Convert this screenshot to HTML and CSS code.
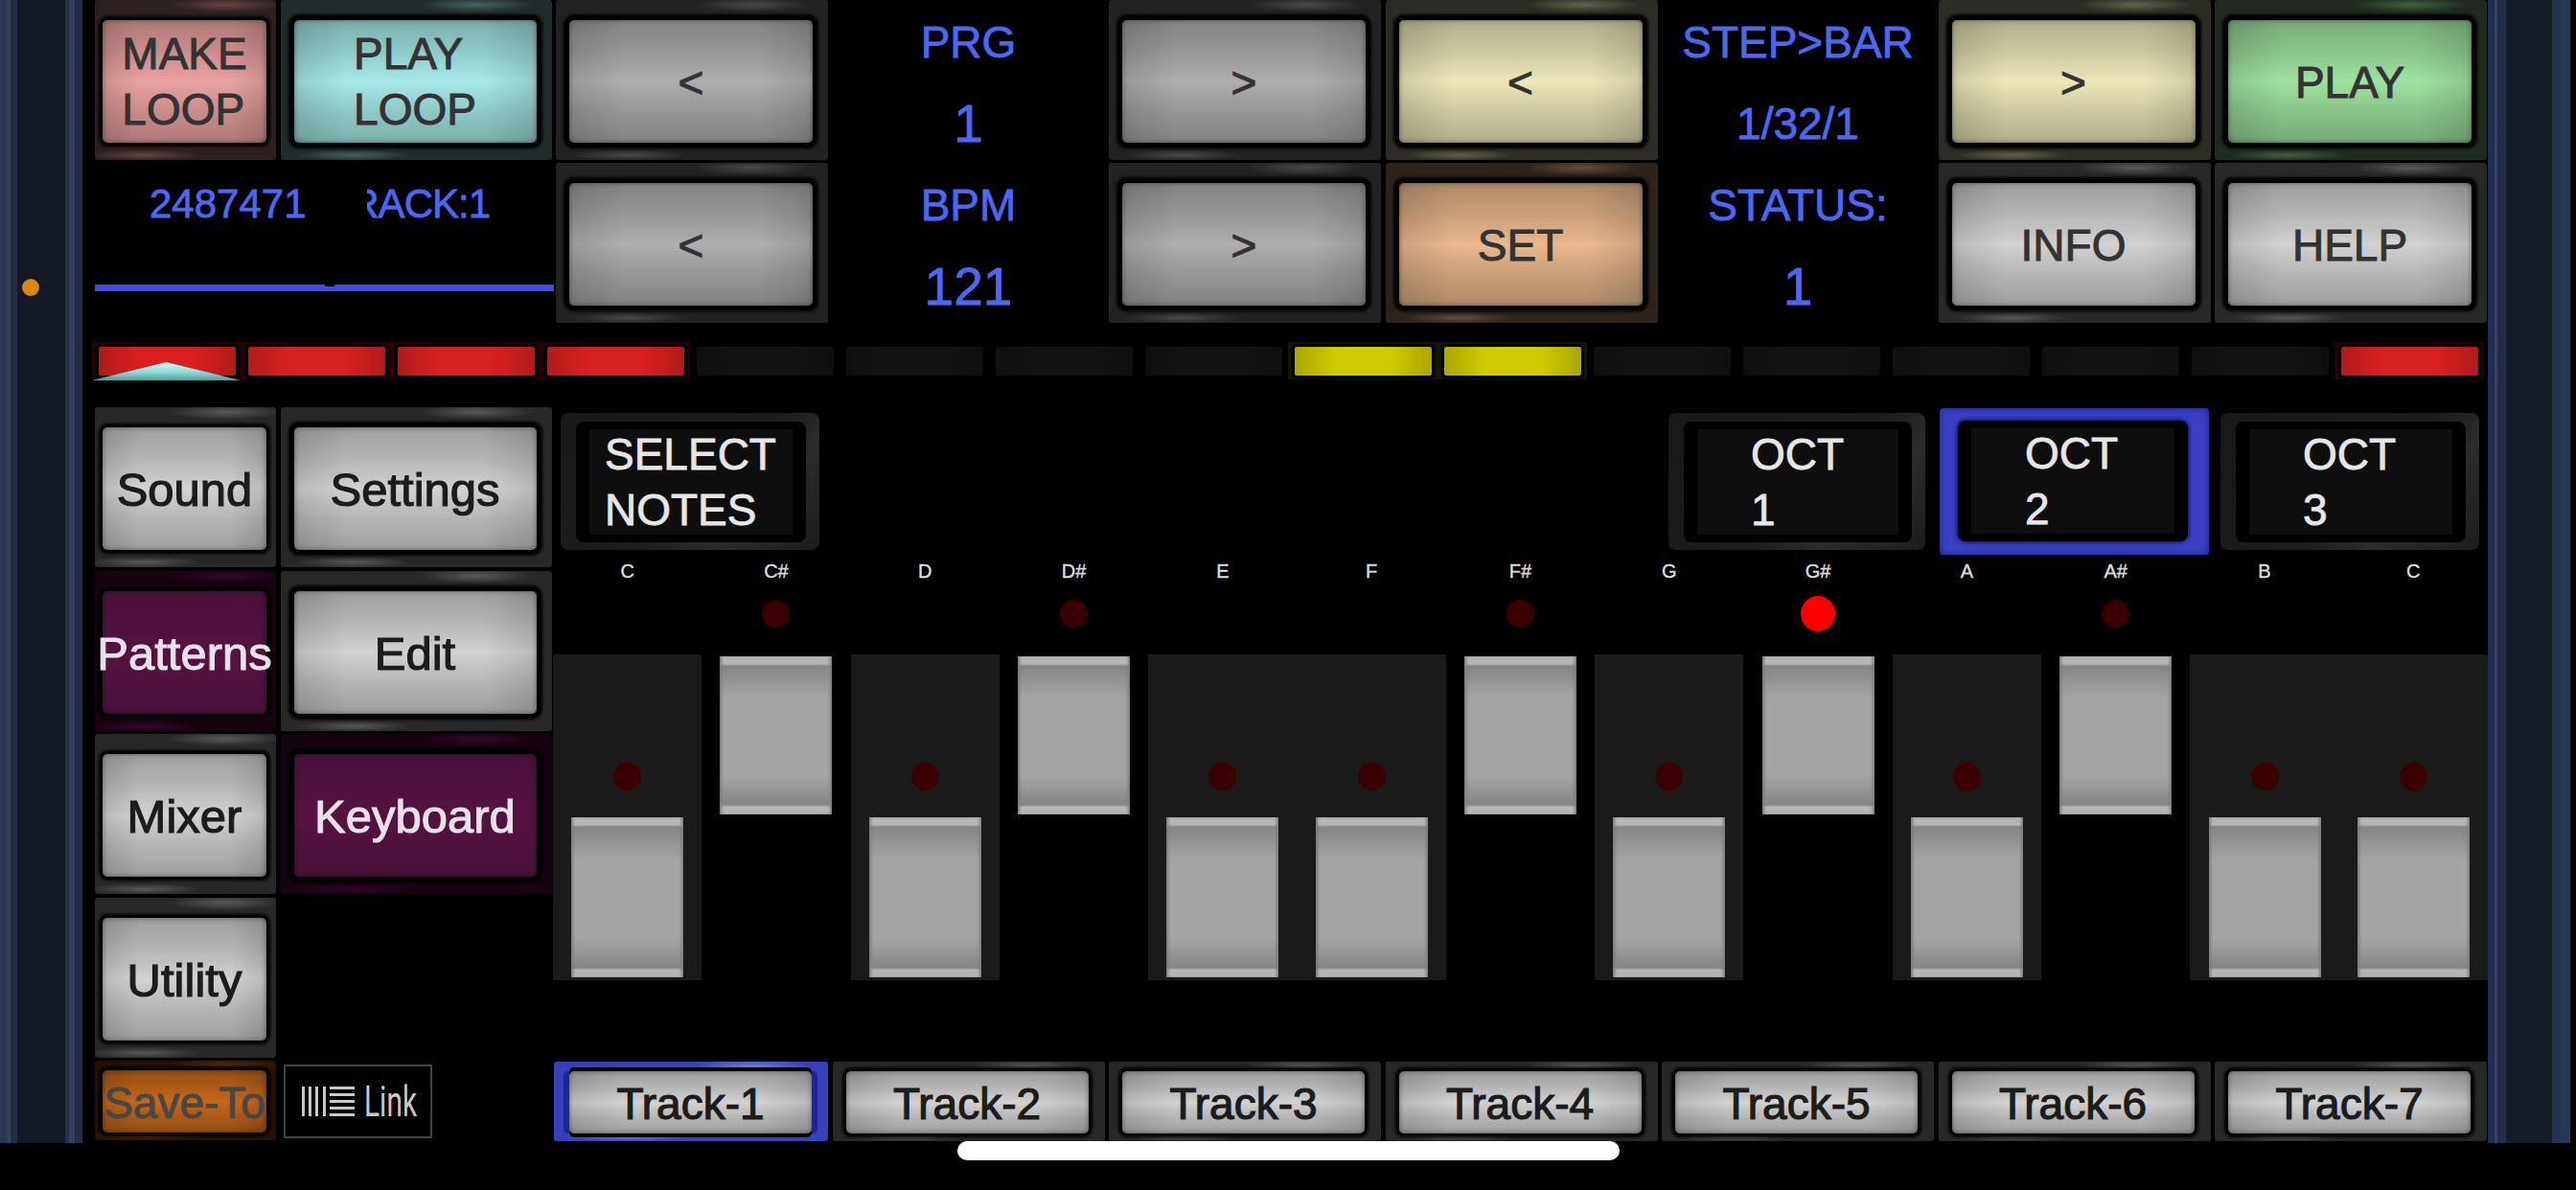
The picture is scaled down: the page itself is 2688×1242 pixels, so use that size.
FILE: index.html
```html
<!DOCTYPE html>
<html lang="en">
<head>
<meta charset="utf-8">
<title>Step sequencer</title>
<link rel="stylesheet" href="styles.css">
</head>
<body>
<div class="stage">
  <div class="bezel bezel-left"><span class="camera-dot"></span></div>
  <main class="main">
    <section class="top-grid">
      <div class="pad pad-narrow t-rose"><div class="face"><span class="stack">MAKE<br>LOOP</span></div></div>
      <div class="pad t-aqua"><div class="face"><span class="stack">PLAY<br>LOOP</span></div></div>
      <div class="pad t-steel"><div class="face">&lt;</div></div>
      <div class="readout"><span class="rl">PRG</span><span class="rl big">1</span></div>
      <div class="pad t-steel"><div class="face">&gt;</div></div>
      <div class="pad t-cream"><div class="face">&lt;</div></div>
      <div class="readout"><span class="rl">STEP&gt;BAR</span><span class="rl">1/32/1</span></div>
      <div class="pad t-cream"><div class="face">&gt;</div></div>
      <div class="pad t-green"><div class="face">PLAY</div></div>

      <div class="info">
        <div class="info-row">
          <span class="info-num">2487471</span>
          <span class="info-track"><span>TRACK:1</span></span>
        </div>
        <div class="info-line"></div>
      </div>
      <div class="pad t-steel"><div class="face">&lt;</div></div>
      <div class="readout"><span class="rl">BPM</span><span class="rl big">121</span></div>
      <div class="pad t-steel"><div class="face">&gt;</div></div>
      <div class="pad t-sand"><div class="face">SET</div></div>
      <div class="readout"><span class="rl">STATUS:</span><span class="rl big">1</span></div>
      <div class="pad t-silver"><div class="face">INFO</div></div>
      <div class="pad t-silver"><div class="face">HELP</div></div>
    </section>

    <section class="steps">
      <div class="step s-red"><div class="step-face"></div><div class="playhead"></div></div>
      <div class="step s-red"><div class="step-face"></div></div>
      <div class="step s-red"><div class="step-face"></div></div>
      <div class="step s-red"><div class="step-face"></div></div>
      <div class="step"><div class="step-face"></div></div>
      <div class="step"><div class="step-face"></div></div>
      <div class="step"><div class="step-face"></div></div>
      <div class="step"><div class="step-face"></div></div>
      <div class="step s-yellow"><div class="step-face"></div></div>
      <div class="step s-yellow"><div class="step-face"></div></div>
      <div class="step"><div class="step-face"></div></div>
      <div class="step"><div class="step-face"></div></div>
      <div class="step"><div class="step-face"></div></div>
      <div class="step"><div class="step-face"></div></div>
      <div class="step"><div class="step-face"></div></div>
      <div class="step s-red"><div class="step-face"></div></div>
    </section>

    <section class="lower">
      <nav class="nav">
        <div class="nav-grid">
          <div class="pad pad-narrow t-silver dark-text"><div class="face">Sound</div></div>
          <div class="pad t-silver dark-text"><div class="face">Settings</div></div>
          <div class="pad pad-narrow t-plum"><div class="face">Patterns</div></div>
          <div class="pad t-silver dark-text"><div class="face">Edit</div></div>
          <div class="pad pad-narrow t-silver dark-text"><div class="face">Mixer</div></div>
          <div class="pad t-plum"><div class="face">Keyboard</div></div>
          <div class="pad pad-narrow t-silver dark-text"><div class="face">Utility</div></div>
        </div>
        <div class="save-row">
          <div class="pad pad-narrow pad-short t-amber"><div class="face">Save-To</div></div>
          <div class="link-box">
            <svg class="link-logo" viewBox="0 0 55 31" aria-hidden="true">
              <rect x="0" y="0" width="3" height="31"/><rect x="7" y="0" width="3" height="31"/><rect x="14" y="0" width="3" height="31"/><rect x="22" y="0" width="3" height="31"/>
              <rect x="29" y="0" width="26" height="3"/><rect x="29" y="7" width="26" height="3"/><rect x="29" y="14" width="26" height="3"/><rect x="29" y="21" width="26" height="3"/><rect x="29" y="28" width="26" height="3"/>
            </svg>
            <span class="link-text">Link</span>
          </div>
        </div>
      </nav>

      <div class="board">
        <div class="select-row">
          <div class="oct oct-select"><div class="oct-in"><span class="stack">SELECT<br>NOTES</span></div></div>
          <div class="oct oct-1"><div class="oct-in"><span class="stack">OCT<br>1</span></div></div>
          <div class="oct oct-2"><div class="oct-in"><span class="stack">OCT<br>2</span></div></div>
          <div class="oct oct-3"><div class="oct-in"><span class="stack">OCT<br>3</span></div></div>
        </div>

        <div class="notes">
          <div class="note"><span class="label">C</span><div class="cell"><span class="led"></span><div class="key"></div></div></div>
          <div class="note sharp"><span class="label">C#</span><span class="led"></span><div class="key"></div></div>
          <div class="note"><span class="label">D</span><div class="cell"><span class="led"></span><div class="key"></div></div></div>
          <div class="note sharp"><span class="label">D#</span><span class="led"></span><div class="key"></div></div>
          <div class="note"><span class="label">E</span><div class="cell"><span class="led"></span><div class="key"></div></div></div>
          <div class="note"><span class="label">F</span><div class="cell"><span class="led"></span><div class="key"></div></div></div>
          <div class="note sharp"><span class="label">F#</span><span class="led"></span><div class="key"></div></div>
          <div class="note"><span class="label">G</span><div class="cell"><span class="led"></span><div class="key"></div></div></div>
          <div class="note sharp"><span class="label">G#</span><span class="led led-on"></span><div class="key"></div></div>
          <div class="note"><span class="label">A</span><div class="cell"><span class="led"></span><div class="key"></div></div></div>
          <div class="note sharp"><span class="label">A#</span><span class="led"></span><div class="key"></div></div>
          <div class="note"><span class="label">B</span><div class="cell"><span class="led"></span><div class="key"></div></div></div>
          <div class="note"><span class="label">C</span><div class="cell"><span class="led"></span><div class="key"></div></div></div>
        </div>

        <div class="tracks">
          <div class="pad pad-short pad-track t-silver dark-text is-active"><div class="face">Track-1</div></div>
          <div class="pad pad-short pad-track t-silver dark-text"><div class="face">Track-2</div></div>
          <div class="pad pad-short pad-track t-silver dark-text"><div class="face">Track-3</div></div>
          <div class="pad pad-short pad-track t-silver dark-text"><div class="face">Track-4</div></div>
          <div class="pad pad-short pad-track t-silver dark-text"><div class="face">Track-5</div></div>
          <div class="pad pad-short pad-track t-silver dark-text"><div class="face">Track-6</div></div>
          <div class="pad pad-short pad-track t-silver dark-text"><div class="face">Track-7</div></div>
        </div>
      </div>
    </section>
  </main>
  <div class="bezel bezel-right"></div>
</div>
<div class="home-pill"></div>
</body>
</html>
```

FILE: styles.css
```css
* { box-sizing: border-box; }

html, body {
  margin: 0;
  width: 2688px;
  height: 1242px;
  background: #000;
  overflow: hidden;
  font-family: "Liberation Sans", Arial, sans-serif;
}

body { position: relative; }

.stage {
  display: flex;
  width: 2682px;
  height: 1193px;
}

.bezel {
  position: relative;
  flex: none;
  width: 86px;
  height: 100%;
}

.bezel-left {
  background: linear-gradient(90deg,
    #2b3755 0 7px, #33425f 7px 11px, #222c45 11px 18px,
    #131825 18px 68px,
    #232f4b 68px 72px, #33415f 72px 78px, #222d4a 78px 86px);
}

.bezel-right {
  background: linear-gradient(90deg,
    #222f4f 0 7px, #33436a 7px 10px, #222d4a 10px 19px,
    #151a27 19px 67px,
    #253353 67px 76px, #2a3858 76px 86px);
}

.camera-dot {
  position: absolute;
  left: 23px;
  top: 291px;
  width: 18px;
  height: 18px;
  border-radius: 50%;
  background: #dc860c;
}

.main {
  flex: none;
  width: 2510px;
  padding-left: 13px;
}

/* top control grid */
.top-grid {
  display: grid;
  grid-template-columns: 189px 283px repeat(7, 284px);
  grid-template-rows: 167px 167px;
  column-gap: 4.5px;
  row-gap: 3px;
}

.pad {
  --c: #aeaeae;
  --frame: color-mix(in srgb, var(--c) 17%, #050505);
  --hi: color-mix(in srgb, var(--c) 42%, #000);
  display: flex;
  min-width: 0;
  padding: 21px 16px 18px 14px;
  border-radius: 3px;
  background:
    radial-gradient(ellipse 60px 8px at 72% 5px, var(--hi), transparent),
    radial-gradient(ellipse 60px 6px at 27% calc(100% - 5px), var(--hi), transparent),
    var(--frame);
  color: #333;
  font-size: 46px;
  -webkit-text-stroke: 1px currentColor;
}

.pad-narrow { padding: 21px 10px 18px 8px; }
.pad-short { padding-top: 10px; padding-bottom: 8px; }
.pad-track { padding-right: 17px; }

.face {
  flex: 1;
  display: flex;
  align-items: center;
  justify-content: center;
  min-width: 0;
  padding-top: 2px;
  border-radius: 5px;
  white-space: nowrap;
  background:
    linear-gradient(90deg, rgba(0,0,0,.12), rgba(0,0,0,0) 22%, rgba(0,0,0,0) 78%, rgba(0,0,0,.12)),
    linear-gradient(180deg, rgba(0,0,0,.25), rgba(0,0,0,.14) 25%, rgba(0,0,0,.02) 47%, rgba(0,0,0,0) 50%, rgba(0,0,0,.02) 53%, rgba(0,0,0,.14) 75%, rgba(0,0,0,.25)),
    var(--c);
  box-shadow: 0 0 3px 6px #000, inset 0 0 5px rgba(0,0,0,.45);
}

.pad-narrow .face,
.pad-short .face { box-shadow: 0 0 3px 4px #000, inset 0 0 5px rgba(0,0,0,.45); }

.stack {
  display: block;
  text-align: left;
  line-height: 58px;
}

.face .stack { margin-top: -2px; }

.t-rose   { --c: #eaa2a2; }
.t-aqua   { --c: #a6e9e6; }
.t-steel  { --c: #aeaeae; }
.t-cream  { --c: #ece8b9; }
.t-green  { --c: #9fe3a0; }
.t-sand   { --c: #e9b88e; }
.t-silver { --c: #d2d2d2; }
.t-plum   { --c: #54123d; --frame: #160310; --hi: #33082a; color: #e8e2e8; }
.t-plum .face { background: linear-gradient(180deg, #48113a, #54133f 50%, #48113a); }
.t-amber  { --c: #c8681a; --frame: #241102; --hi: #5a2c06; color: #474747; }

.dark-text { color: #1c1c1c; -webkit-text-stroke: 1.2px currentColor; }

.pad.is-active {
  --frame: #3a40bc;
  --hi: #7478ea;
  margin-left: -2px;
  padding-left: 16px;
}

.is-active .face {
  box-shadow: 0 -4px 0 0 #000, 0 4px 0 0 #000, -6px 0 1px 0 #1c22a0, 6px 0 1px 0 #1c22a0, inset 0 0 5px rgba(0,0,0,.45);
}

/* blue readouts */
.readout {
  display: flex;
  flex-direction: column;
  color: #4a68f5;
  font-size: 46px;
  -webkit-text-stroke: .8px #4a68f5;
}

.rl {
  flex: none;
  display: flex;
  align-items: center;
  justify-content: center;
  height: 84px;
  padding-top: 3px;
}

.rl + .rl {
  height: 83px;
  padding-top: 6px;
}

.big { font-size: 55px; }

.info {
  grid-column: 1 / span 2;
  color: #4a68f5;
}

.info-row {
  display: flex;
  align-items: center;
  height: 86px;
  padding-left: 57px;
  font-size: 42px;
  -webkit-text-stroke: .8px #4a68f5;
}

.info-num { width: 227px; }

.info-track {
  display: flex;
  justify-content: flex-end;
  width: 128px;
  overflow: hidden;
  white-space: nowrap;
  letter-spacing: -1px;
}

.info-track span { flex: none; }

.info-line {
  position: relative;
  width: 479px;
  height: 7px;
  margin-top: 41px;
  background: #4848f2;
}

.info-line::after {
  content: "";
  position: absolute;
  left: 240px;
  top: 0;
  width: 10px;
  height: 2px;
  background: #000;
}

/* step lights */
.steps {
  display: grid;
  grid-template-columns: repeat(16, 156px);
  height: 39px;
  margin: 20px 0 0 -3px;
}

.step {
  --s: #121212;
  --sf: #000;
  position: relative;
  display: flex;
  padding: 5px 6px 4px 7px;
  background: var(--sf);
}

.step-face {
  flex: 1;
  border-radius: 2px;
  background:
    linear-gradient(90deg, rgba(0,0,0,.18), rgba(0,0,0,0) 30%, rgba(0,0,0,0) 70%, rgba(0,0,0,.18)),
    var(--s);
}

.s-red    { --s: #d82020; --sf: #200303; }
.s-yellow { --s: #cfcb00; --sf: #141401; }

.s-red .step-face, .s-yellow .step-face { box-shadow: 0 0 1px 3px #000; }

.playhead {
  position: absolute;
  left: 0;
  right: 1px;
  bottom: -1px;
  height: 19px;
  clip-path: polygon(0 100%, 50% 0, 100% 100%);
  background: linear-gradient(180deg, #d6fbf8, #8fdcda 55%, #4f9c9c);
}

/* lower area */
.lower {
  display: flex;
  margin-top: 29px;
}

.nav {
  flex: none;
  width: 478px;
}

.nav-grid {
  display: grid;
  grid-template-columns: 189px 283px;
  grid-auto-rows: 167px;
  column-gap: 4.5px;
  row-gap: 3.5px;
}

.nav .pad { font-size: 49px; }
.nav .pad.t-amber { font-size: 46px; }

.save-row {
  display: flex;
  align-items: flex-start;
  gap: 8px;
  margin-top: 3.5px;
}

.save-row .pad { flex: none; width: 189px; height: 83px; }

.link-box {
  display: flex;
  align-items: center;
  justify-content: center;
  gap: 10px;
  width: 155px;
  height: 77px;
  margin-top: 4px;
  border: 2px solid #444;
  color: #c8c8c8;
}

.link-logo {
  width: 55px;
  height: 31px;
  fill: #c8c8c8;
}

.link-text {
  display: block;
  width: 52px;
  font-family: Roboto, "Liberation Sans", sans-serif;
  font-weight: 400;
  font-size: 44px;
  line-height: 44px;
  transform: scaleX(.68);
  transform-origin: left center;
  white-space: nowrap;
}

.board {
  flex: 1;
  min-width: 0;
}

.select-row {
  display: flex;
  align-items: center;
  height: 154px;
  padding: 0 9px 0 8px;
}

.oct {
  flex: none;
  display: flex;
  height: 143px;
  padding: 9px 14px 8px 16px;
  border-radius: 8px;
  background: linear-gradient(135deg, #181818 0%, #1c1c1c 55%, #2c2c2c 72%, #1c1c1c 100%);
}

.oct-in {
  flex: 1;
  display: flex;
  align-items: center;
  padding-left: 56px;
  border: solid #000;
  border-width: 8px 14px;
  border-radius: 8px;
  background: #0e0e0e;
  color: #e6e6e6;
  font-size: 46px;
  -webkit-text-stroke: .8px #e6e6e6;
}

.oct-select { width: 270px; }
.oct-select .oct-in { padding-left: 16px; }
.oct-1 { width: 268px; margin-left: auto; }
.oct-2 {
  width: 281px;
  height: 153px;
  margin-left: 15px;
  padding: 13px 22px 14px 19px;
  border-radius: 4px;
  background: #3a40c2;
  box-shadow: inset 0 0 7px #1f2386;
}
.oct-2 .oct-in { box-shadow: 0 0 4px 1px #0a0c50; }
.oct-3 { width: 270px; margin-left: 12px; }

.notes {
  display: grid;
  grid-template-columns: repeat(13, 1fr);
  height: 439px;
  margin-top: 5px;
}

.note {
  display: flex;
  flex-direction: column;
  align-items: center;
}

.label {
  flex: none;
  height: 24px;
  color: #dcdcdc;
  font-size: 20px;
  font-weight: 400;
  line-height: 24px;
  -webkit-text-stroke: .4px #dcdcdc;
}

.led {
  display: block;
  flex: none;
  width: 29px;
  height: 29px;
  border-radius: 50%;
  background: #3a0000;
}

.led-on {
  width: 36px;
  height: 37px;
  margin-top: -4px;
  margin-bottom: -4px;
  background: #ff0000;
}

.cell {
  flex: 1;
  align-self: stretch;
  display: flex;
  flex-direction: column;
  align-items: center;
  margin-top: 75px;
  padding-top: 113px;
  background: #1a1a1a;
}

.key {
  flex: none;
  width: 117px;
  height: 167px;
  margin-top: 28px;
  background: linear-gradient(180deg,
    #b8b8b8 0, #b4b4b4 8px, #858585 10px, #a4a4a4 26%, #a4a4a4 76%,
    #858585 calc(100% - 10px), #b4b4b4 calc(100% - 8px), #b8b8b8 100%);
  box-shadow: inset 3px 0 3px -1px #7c7c7c, inset -3px 0 3px -1px #7c7c7c;
}

.sharp .led { margin-top: 18px; }
.sharp .led-on { margin-top: 14px; }
.sharp .key { height: 165px; margin-top: 30px; }

.tracks {
  display: grid;
  grid-template-columns: repeat(7, 284px);
  column-gap: 4.5px;
  height: 83px;
  margin: 85px 0 0 3px;
}

.home-pill {
  position: absolute;
  left: 999px;
  top: 1191px;
  width: 691px;
  height: 20px;
  border-radius: 10px;
  background: #fff;
}
```
